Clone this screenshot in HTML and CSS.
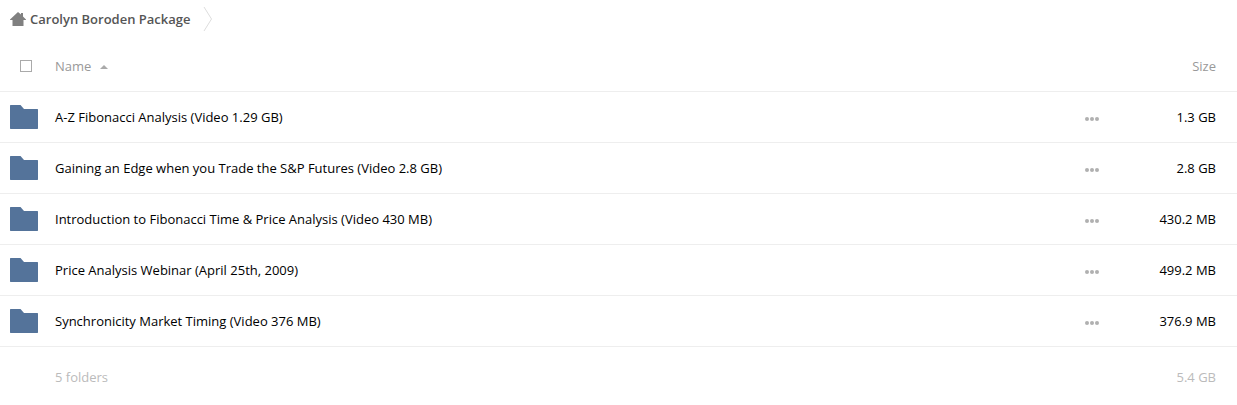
FILE: index.html
```html
<!DOCTYPE html>
<html lang="en">
<head>
<meta charset="utf-8">
<title>Carolyn Boroden Package</title>
<link rel="stylesheet" href="styles.css">
</head>
<body>
<svg class="defs" aria-hidden="true">
<symbol id="folder" viewBox="0 0 28 24"><path d="M0 .5L.5 0H10.500L14 4H27.500L28 4.500V23.500L27.500 24H.5L0 23.500Z"/></symbol>
<symbol id="dots" viewBox="0 0 14 4"><circle cx="2" cy="2" r="2"/><circle cx="7" cy="2" r="2"/><circle cx="12" cy="2" r="2"/></symbol>
</svg>
<nav class="breadcrumb" aria-label="Breadcrumb">
<a class="crumb" href="#"><svg class="home" viewBox="0 0 16 14" aria-hidden="true"><path d="M8 0L11 2.600V1H13V4.400L16 7.500V8H13.500V14H2.500V8H0V7.500Z"/></svg>Carolyn Boroden Package</a>
<svg class="chevron" viewBox="0 0 10 24" aria-hidden="true"><path d="M1 0L8.500 12L1 24"/></svg>
</nav>
<table class="files">
<thead><tr><th class="pick"><input class="check" type="checkbox" aria-label="Select all"></th><th class="name"><button class="sort" type="button">Name<span class="arrow"></span></button></th><th class="actions"></th><th class="size">Size</th></tr></thead>
<tbody>
<tr><td class="pick"><svg class="folder"><use href="#folder"/></svg></td><td class="name"><a class="link" href="#">A-Z Fibonacci Analysis (Video 1.29 GB)</a></td><td class="actions"><button class="more" type="button" aria-label="More actions"><svg class="dots"><use href="#dots"/></svg></button></td><td class="size">1.3 GB</td></tr>
<tr><td class="pick"><svg class="folder"><use href="#folder"/></svg></td><td class="name"><a class="link" href="#">Gaining an Edge when you Trade the S&amp;P Futures (Video 2.8 GB)</a></td><td class="actions"><button class="more" type="button" aria-label="More actions"><svg class="dots"><use href="#dots"/></svg></button></td><td class="size">2.8 GB</td></tr>
<tr><td class="pick"><svg class="folder"><use href="#folder"/></svg></td><td class="name"><a class="link" href="#">Introduction to Fibonacci Time &amp; Price Analysis (Video 430 MB)</a></td><td class="actions"><button class="more" type="button" aria-label="More actions"><svg class="dots"><use href="#dots"/></svg></button></td><td class="size">430.2 MB</td></tr>
<tr><td class="pick"><svg class="folder"><use href="#folder"/></svg></td><td class="name"><a class="link" href="#">Price Analysis Webinar (April 25th, 2009)</a></td><td class="actions"><button class="more" type="button" aria-label="More actions"><svg class="dots"><use href="#dots"/></svg></button></td><td class="size">499.2 MB</td></tr>
<tr><td class="pick"><svg class="folder"><use href="#folder"/></svg></td><td class="name"><a class="link" href="#">Synchronicity Market Timing (Video 376 MB)</a></td><td class="actions"><button class="more" type="button" aria-label="More actions"><svg class="dots"><use href="#dots"/></svg></button></td><td class="size">376.9 MB</td></tr>
</tbody>
<tfoot><tr><td class="pick"></td><td class="name">5 folders</td><td class="actions"></td><td class="size">5.4 GB</td></tr></tfoot>
</table>
</body>
</html>
```
FILE: styles.css
```css
* { box-sizing: border-box; }
body { margin: 0; background: #fff; color: #000; font: 13px/20px "Open Sans", sans-serif; }
.defs { display: none; }
.breadcrumb { display: flex; align-items: center; gap: 13px; height: 40px; padding: 0 10px 2px; }
.crumb { display: flex; align-items: center; gap: 4px; color: #555; font-weight: 600; text-decoration: none; }
.home { width: 16px; height: 14px; fill: #808080; }
.chevron { width: 10px; height: 24px; fill: none; stroke: #ddd; }
.files { width: 100%; border-collapse: collapse; table-layout: fixed; }
th, td { height: 51px; padding: 0; border-bottom: 1px solid #eee; text-align: left; font-weight: 400; vertical-align: middle; }
thead { color: #999; }
th { padding-top: 2px; }
tfoot { color: #bbb; }
tfoot td { height: 61px; border-bottom: 0; }
.pick { width: 55px; padding-left: 10px; }
.size { width: 130px; padding-right: 21px; text-align: right; }
.actions { width: 30px; text-align: center; }
.check { display: block; appearance: none; width: 12px; height: 12px; margin: 0 0 0 10px; border: 1px solid #aaa; background: #fff; }
.sort, .more { border: 0; padding: 0; background: none; color: inherit; font: inherit; }
.sort { display: flex; align-items: center; gap: 9px; }
.arrow { margin-top: 2px; border: 4px solid transparent; border-top: 0; border-bottom-color: #aaa; }
.folder { display: block; width: 28px; height: 24px; fill: #54739a; }
.link { color: inherit; text-decoration: none; }
.more { display: block; margin: 0 auto; padding-top: 4px; }
.dots { display: block; width: 14px; height: 4px; fill: #b0b0b0; }
```
